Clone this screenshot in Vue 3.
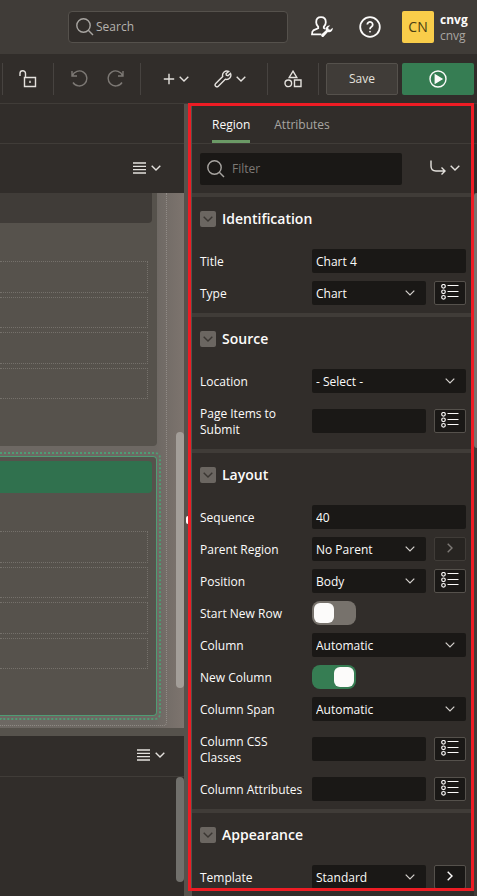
<script setup>
import { reactive } from 'vue'

const sections = reactive([
  {
    title: 'Identification',
    rows: [
      { id: 'title', label: 'Title', kind: 'text', value: 'Chart 4' },
      { id: 'type', label: 'Type', kind: 'select', value: 'Chart', action: 'list' }
    ]
  },
  {
    title: 'Source',
    rows: [
      { id: 'location', label: 'Location', kind: 'select', value: '- Select -' },
      { id: 'page-items', label: 'Page Items to Submit', kind: 'text', value: '', action: 'list' }
    ]
  },
  {
    title: 'Layout',
    rows: [
      { id: 'sequence', label: 'Sequence', kind: 'text', value: '40' },
      { id: 'parent', label: 'Parent Region', kind: 'select', value: 'No Parent', action: 'go', disabled: true },
      { id: 'position', label: 'Position', kind: 'select', value: 'Body', action: 'list' },
      { id: 'new-row', label: 'Start New Row', kind: 'switch', value: false },
      { id: 'column', label: 'Column', kind: 'select', value: 'Automatic' },
      { id: 'new-column', label: 'New Column', kind: 'switch', value: true },
      { id: 'span', label: 'Column Span', kind: 'select', value: 'Automatic' },
      { id: 'css', label: 'Column CSS Classes', kind: 'text', value: '', action: 'list' },
      { id: 'attrs', label: 'Column Attributes', kind: 'text', value: '', action: 'list' }
    ]
  },
  {
    title: 'Appearance',
    rows: [
      { id: 'template', label: 'Template', kind: 'select', value: 'Standard', action: 'go' }
    ]
  }
])
</script>

<template>
  <div class="app">
    <header class="topbar">
      <div class="search">
        <svg class="lens" viewBox="0 0 18 18"><circle cx="7.5" cy="7.5" r="6.7" /><path d="M12.3 12.3 17 17" /></svg>
        <input type="text" placeholder="Search" aria-label="Search" />
      </div>
      <nav class="top-actions">
        <button class="icon-btn" aria-label="Administration">
          <svg class="admin" viewBox="0 0 22 22">
            <path d="M10 1.2c-3 0-4.8 2.1-4.8 5 0 2 .8 3.600 2 4.600v1.400L2.300 14.400Q1 15.200 1 18.400h9.400M10 1.200c3 0 4.800 2.100 4.800 5 0 2-.8 3.600-2 4.600v1.200l1.600.8" />
            <path class="solid" d="M19.200 9.600a3.600 3.600 0 0 0-4.300 4.700l-4.300 4a1.500 1.500 0 0 0 2.200 2.100l4.100-4.300a3.600 3.600 0 0 0 4.700-4.300l-2.200 1.900-1.800-.5-.4-1.700z" />
          </svg>
        </button>
        <button class="icon-btn" aria-label="Help">
          <svg class="help" viewBox="0 0 22 22">
            <circle cx="11" cy="11" r="9.800" />
            <path d="M8.300 8.500a2.700 2.700 0 1 1 4.200 2.300c-1 .7-1.500 1.200-1.500 2.400" /><circle class="solid" cx="11" cy="15.700" r=".5" />
          </svg>
        </button>
      </nav>
      <div class="account">
        <span class="avatar">CN</span>
        <div class="names"><strong>cnvg</strong><span>cnvg</span></div>
      </div>
    </header>

    <div class="toolbar">
      <i class="sep"></i>
      <button class="tool" aria-label="Unlock page">
        <svg class="ic18" viewBox="0 0 18 18"><path d="M1 6V3.500a2.500 2.500 0 0 1 5.500 0V7M5.500 7.500h11v9h-11z" /><path d="M11 10.800v2.200" /></svg>
      </button>
      <i class="sep"></i>
      <div class="group history">
        <button class="tool faded" aria-label="Undo">
          <svg class="ic18" viewBox="0 0 18 18"><path d="M1 1v5h5M1.300 5.800A7.500 7.500 0 1 1 2 12.500" /></svg>
        </button>
        <button class="tool faded" aria-label="Redo">
          <svg class="ic18" viewBox="0 0 18 18"><path d="M17 1v5h-5M16.700 5.800A7.500 7.500 0 1 0 16 12.500" /></svg>
        </button>
      </div>
      <i class="sep"></i>
      <div class="group menus">
        <button class="tool" aria-label="Create">
          <svg class="plus" viewBox="0 0 12 12"><path d="M6 .8v10.400M.8 6h10.400" /></svg>
          <svg class="chev" viewBox="0 0 10 6"><path d="M.7.700 5 5 9.300.7" /></svg>
        </button>
        <button class="tool" aria-label="Utilities">
          <svg class="ic18" viewBox="0 0 18 18"><path d="M14.700 1.500a4.300 4.300 0 0 0-6 5L1.700 13.600a1.600 1.600 0 0 0 2.600 2.600l7-7a4.300 4.300 0 0 0 5.200-5.800l-2.600 2.300-1.500-.4-.4-1.500z" /></svg>
          <svg class="chev" viewBox="0 0 10 6"><path d="M.7.700 5 5 9.300.7" /></svg>
        </button>
      </div>
      <i class="sep"></i>
      <button class="tool" aria-label="Shared components">
        <svg class="ic18" viewBox="0 0 18 18"><path d="M9 1.200 12.800 7.500H5.200zM10.500 10h6.500v6.500h-6.500z" /><circle cx="4.300" cy="13.300" r="3.300" /></svg>
      </button>
      <i class="sep"></i>
      <button class="save">Save</button>
      <button class="run" aria-label="Save and run page">
        <svg class="ic18" viewBox="0 0 18 18"><circle cx="9" cy="9" r="8" /><path class="solid" d="M6.300 5v8l6.500-4z" /></svg>
      </button>
    </div>

    <main class="workspace">
      <section class="editor">
        <div class="pane-tabs"></div>
        <div class="pane-tools">
          <button class="menu" aria-label="Layout menu">
            <svg class="lines" viewBox="0 0 13 12"><path d="M0 1h13M0 4.300h13M0 7.700h13M0 11h13" /></svg>
            <svg class="chev" viewBox="0 0 10 6"><path d="M.7.700 5 5 9.300.7" /></svg>
          </button>
        </div>
        <div class="canvas">
          <div class="column">
            <article class="region">
              <div class="region-head"></div>
              <div class="slots"><div v-for="n in 4" :key="n" class="slot"></div></div>
            </article>
            <div class="selection">
              <article class="region selected">
                <div class="region-head"></div>
                <div class="slots"><div v-for="n in 4" :key="n" class="slot"></div></div>
              </article>
            </div>
          </div>
          <div class="scroll canvas-scroll"></div>
        </div>
        <div class="hsplit"></div>
        <div class="gallery-head">
          <button class="menu" aria-label="Gallery menu">
            <svg class="lines" viewBox="0 0 13 12"><path d="M0 1h13M0 4.300h13M0 7.700h13M0 11h13" /></svg>
            <svg class="chev" viewBox="0 0 10 6"><path d="M.7.700 5 5 9.300.7" /></svg>
          </button>
        </div>
        <div class="gallery"><div class="scroll gallery-scroll"></div></div>
      </section>

      <div class="vsplit"><i class="grip"></i></div>

      <section class="props">
        <nav class="tabs">
          <a href="#region" class="active">Region</a>
          <a href="#attributes">Attributes</a>
        </nav>
        <div class="filter-row">
          <div class="filter">
            <svg class="lens" viewBox="0 0 18 18"><circle cx="7.500" cy="7.500" r="6.700" /><path d="M12.300 12.300 17 17" /></svg>
            <input type="text" placeholder="Filter" aria-label="Filter" />
          </div>
          <button class="menu" aria-label="Go to group">
            <svg class="goto" viewBox="0 0 16 16"><path d="M1 .5V6q0 5 5 5h9M11.500 7.500 15 11l-3.500 3.500" /></svg>
            <svg class="chev" viewBox="0 0 10 6"><path d="M.7.700 5 5 9.300.7" /></svg>
          </button>
        </div>
        <div class="props-body">
          <div class="groups">
            <section v-for="s in sections" :key="s.title" class="prop-group">
              <h2>
                <button class="toggle" :aria-label="'Collapse ' + s.title">
                  <svg class="chev" viewBox="0 0 10 6"><path d="M.7.700 5 5 9.300.7" /></svg>
                </button>
                {{ s.title }}
              </h2>
              <div v-for="r in s.rows" :key="r.id" class="row">
                <label :for="r.id">{{ r.label }}</label>
                <input v-if="r.kind === 'text'" :id="r.id" v-model="r.value" class="field" type="text" />
                <div v-else-if="r.kind === 'select'" class="select">
                  <select :id="r.id" v-model="r.value" class="field"><option>{{ r.value }}</option></select>
                  <svg class="chev" viewBox="0 0 10 6"><path d="M.7.700 5 5 9.300.7" /></svg>
                </div>
                <input v-else :id="r.id" v-model="r.value" class="switch" type="checkbox" role="switch" />
                <button v-if="r.action" class="action" :disabled="r.disabled" :aria-label="r.label + ' options'">
                  <svg v-if="r.action === 'list'" class="list" viewBox="0 0 18 16">
                    <circle cx="2.500" cy="2.300" r="1.800" /><circle cx="2.500" cy="7.800" r="1.800" /><circle cx="2.500" cy="13.300" r="1.800" />
                    <path d="M6.500 1.500h11M6.500 7.500h11M6.500 12.500h11" />
                  </svg>
                  <svg v-else class="go" viewBox="0 0 6 10"><path d="M.7.700 5 5 .7 9.300" /></svg>
                </button>
              </div>
            </section>
          </div>
          <div class="props-track"><div class="props-thumb"></div></div>
        </div>
        <div class="callout"></div>
      </section>
    </main>
  </div>
</template>

<style>
body {
  background: #312d2a;
}
</style>

<style scoped>
* {
  box-sizing: border-box;
}
.app {
  display: flex;
  flex-direction: column;
  height: 100vh;
  overflow: hidden;
  background: #312d2a;
  color: #fcfbfa;
  font: 12px/16px "Open Sans", "Noto Sans", sans-serif;
}
button, input, select {
  margin: 0;
  font: inherit;
  color: inherit;
}
button {
  display: flex;
  align-items: center;
  justify-content: center;
  padding: 0;
  border: 0;
  background: none;
}
svg {
  flex: none;
  fill: none;
  stroke: currentColor;
  stroke-width: 1.4;
}
.solid {
  fill: currentColor;
}
.ic18 {
  width: 18px;
  height: 18px;
}
.chev {
  width: 10px;
  height: 6px;
}
.lens {
  width: 18px;
  height: 18px;
  color: #a8a5a1;
}

.topbar {
  display: flex;
  align-items: center;
  flex: none;
  height: 54px;
  padding: 0 8px 0 68px;
  background: #403c38;
}
.search {
  display: flex;
  align-items: center;
  flex: 1;
  gap: 2px;
  height: 32px;
  padding: 0 7px;
  border: 1px solid #55514c;
  border-radius: 4px;
  background: #312d2a;
}
.search input, .filter input {
  width: 100%;
  min-width: 0;
  padding: 0;
  border: 0;
  outline: 0;
  background: none;
}
.search input::placeholder {
  color: #b5b2ae;
  opacity: 1;
}
.top-actions {
  display: flex;
  margin: 0 8px 0 10px;
}
.icon-btn {
  width: 48px;
  height: 32px;
}
.admin, .help {
  width: 22px;
  height: 22px;
  stroke-width: 1.8;
}
.admin .solid {
  stroke: none;
}
.help .solid {
  stroke-width: 1;
}
.account {
  display: flex;
  gap: 6px;
}
.avatar {
  display: grid;
  place-items: center;
  width: 32px;
  height: 32px;
  border-radius: 2px;
  background: #f9cd4a;
  color: #4a3d12;
  font-size: 14px;
}
.names {
  display: flex;
  flex-direction: column;
  min-width: 29px;
  padding-top: 1px;
}
.names span {
  color: #a8a5a1;
}

.toolbar {
  display: flex;
  align-items: center;
  flex: none;
  height: 50px;
  padding: 0 3px 0 2px;
  border-bottom: 1px solid #403c38;
}
.sep {
  width: 1px;
  height: 32px;
  background: #474340;
}
.tool {
  width: 50px;
  height: 32px;
  gap: 6px;
  color: #e4e1dd;
}
.faded {
  color: #7d7975;
}
.group {
  display: flex;
  padding: 0 8px;
}
.history .tool {
  width: 35px;
}
.menus .tool {
  width: 54px;
  gap: 4px;
}
.menus {
  padding: 0 10px 0 8px;
}
.plus {
  width: 12px;
  height: 12px;
}
.save, .run {
  width: 72px;
  height: 32px;
  border-radius: 2px;
}
.save {
  margin-left: auto;
  border: 1px solid #55514c;
  background: #403c38;
  color: #e4e1dd;
}
.run {
  margin-left: 4px;
  background: #367d53;
}

.workspace {
  display: grid;
  grid-template-columns: 184fr 8px 285fr;
  flex: 1;
  min-height: 0;
}
.editor, .props {
  display: flex;
  flex-direction: column;
  min-width: 0;
  min-height: 0;
}
.pane-tabs {
  flex: none;
  height: 40px;
  border-bottom: 1px solid #403c38;
}
.pane-tools {
  display: flex;
  justify-content: flex-end;
  flex: none;
  height: 49px;
  padding-right: 23px;
}
.menu {
  gap: 5px;
  padding-bottom: 2px;
  color: #e4e1dd;
}
.lines {
  width: 13px;
  height: 12px;
  stroke-width: 1.3;
}
.canvas {
  display: flex;
  justify-content: space-between;
  flex: none;
  background: linear-gradient(90deg, #6d6863 84%, #7d746e);
}
.column {
  width: 167px;
  margin-bottom: 2px;
  padding: 0 5px 5px 0;
  border: 1px dotted #918c87;
  border-width: 0 1px 1px 0;
  border-radius: 0 0 4px 0;
}
.region {
  padding: 0 5px 47px 0;
  margin-right: 4px;
  border-radius: 0 0 4px 0;
  background: #56524c;
}
.region-head {
  height: 30px;
  border-radius: 0 0 4px 0;
  background: #403c38;
}
.slots {
  display: grid;
  grid-template-rows: repeat(4, 1fr);
  gap: 4px;
  height: 138px;
  margin: 38px 4px 0 0;
}
.slot {
  border: 1px dotted #75716b;
  border-left: 0;
}
.selection {
  margin-top: 6px;
  padding: 2px 2px 2px 0;
  border: 2px dotted #4f9d74;
  border-left: 0;
  border-radius: 0 6px 6px 0;
}
.selected {
  margin: 0;
  padding: 4px 4px 46px 0;
  border: 1px solid #4f9d74;
  border-left: 0;
  border-radius: 0 4px 4px 0;
}
.selected .region-head {
  height: 32px;
  border-radius: 0 4px 4px 0;
  background: #30714e;
}
.scroll {
  width: 8px;
  border-radius: 4px;
}
.canvas-scroll {
  height: 256px;
  margin-top: 239px;
  background: #a39e99;
}
.hsplit {
  flex: none;
  height: 8px;
  background: #56524c;
}
.gallery-head {
  display: flex;
  justify-content: flex-end;
  flex: none;
  height: 41px;
  padding-right: 19px;
  border-bottom: 1px solid #403c38;
}
.gallery {
  display: flex;
  justify-content: flex-end;
}
.gallery-scroll {
  height: 105px;
  background: #71706c;
}
.vsplit {
  display: flex;
  align-items: center;
  justify-content: center;
  background: #56524c;
}
.grip {
  width: 4px;
  height: 8px;
  margin-top: 40px;
  border-radius: 2px;
  background: #fcfbfa;
}

.props {
  position: relative;
}
.callout {
  position: absolute;
  inset: -1px 3px 5px -4px;
  border: 3px solid #ed1c24;
  pointer-events: none;
}
.tabs {
  display: flex;
  gap: 24px;
  flex: none;
  height: 40px;
  padding-left: 20px;
  border-bottom: 1px solid #403c38;
}
.tabs a {
  padding: 13px 0 7px;
  color: #a8a5a1;
  text-decoration: none;
}
.tabs .active {
  border-bottom: 3px solid #6b9a66;
  color: #fcfbfa;
}
.filter-row {
  display: flex;
  align-items: center;
  gap: 28px;
  flex: none;
  height: 49px;
  padding: 0 17px 0 8px;
}
.filter {
  display: flex;
  align-items: center;
  flex: 1;
  gap: 7px;
  height: 32px;
  padding: 0 7px;
  border-radius: 2px;
  background: #1a1816;
}
.filter input::placeholder {
  color: #7d7975;
  opacity: 1;
}
.filter-row .menu {
  gap: 4px;
}
.goto {
  width: 16px;
  height: 16px;
}
.props-body {
  display: flex;
  flex: 1;
  min-height: 0;
}
.groups {
  flex: 1;
  min-width: 0;
  overflow: hidden;
}
.prop-group {
  padding: 0 8px;
  border-top: 4px solid #403c38;
}
.prop-group h2 {
  display: flex;
  align-items: center;
  gap: 6px;
  height: 44px;
  margin: 0 0 8px;
  font-size: 14px;
  font-weight: 600;
}
.toggle {
  width: 16px;
  height: 16px;
  border-radius: 2px;
  background: #6b6661;
  color: #3a3632;
}
.row {
  display: flex;
  align-items: center;
  margin-bottom: 8px;
}
.row label {
  flex: none;
  width: 112px;
  padding: 5px 8px 3px 0;
}
.field {
  flex: 1;
  width: 100%;
  min-width: 0;
  height: 24px;
  padding: 1px 4px 0;
  border: 0;
  border-radius: 2px;
  outline: 0;
  background: #1a1816;
  appearance: none;
}
.select {
  position: relative;
  display: flex;
  flex: 1;
  min-width: 0;
}
.select .chev {
  position: absolute;
  top: 9px;
  right: 11px;
  color: #d5d2ce;
  stroke-width: 1.2;
}
.action {
  flex: none;
  width: 32px;
  height: 24px;
  margin-left: 8px;
  padding-bottom: 2px;
  border: 1px solid #55514c;
  border-radius: 2px;
  background: #1a1816;
}
.action:disabled {
  border-color: #403c38;
  background: #272421;
  color: #7d7975;
}
.list {
  width: 18px;
  height: 16px;
  stroke-width: 1.2;
}
.go {
  width: 6px;
  height: 10px;
}
.switch {
  width: 44px;
  height: 24px;
  padding: 2px;
  border-radius: 8px;
  background: #77726c;
  appearance: none;
}
.switch::before {
  content: "";
  display: block;
  width: 20px;
  height: 20px;
  border-radius: 6px;
  background: #fcfbfa;
}
.switch:checked {
  background: #367d53;
}
.switch:checked::before {
  margin-left: auto;
}
.props-track {
  flex: none;
  width: 3px;
  background: #403c38;
}
.props-thumb {
  height: 255px;
  border-radius: 4px 0 0 4px;
  background: #77736e;
}
</style>
